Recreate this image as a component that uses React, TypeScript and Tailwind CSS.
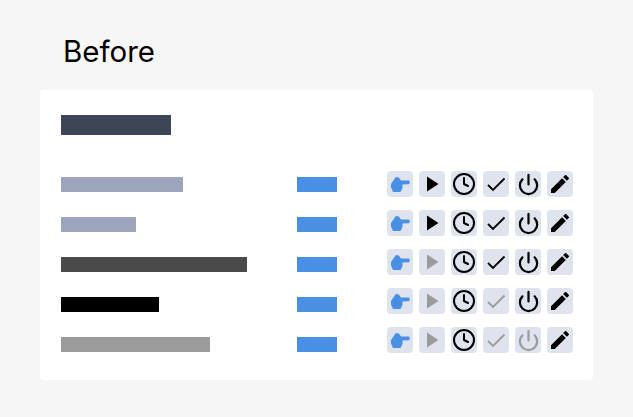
import React from 'react';
import { Clock, Power } from 'lucide-react';
import { MdEdit } from 'react-icons/md';

const bars = [
  { width: 'w-[122px]', color: 'bg-[#9ca5bb]' },
  { width: 'w-[75px]', color: 'bg-[#9ca5bb]' },
  { width: 'w-[186px]', color: 'bg-[#4a4a4a]' },
  { width: 'w-[98px]', color: 'bg-black' },
  { width: 'w-[149px]', color: 'bg-[#9b9b9b]' },
];

const rows = [
  { play: true, check: true, power: true },
  { play: true, check: true, power: true },
  { play: false, check: true, power: true },
  { play: false, check: false, power: true },
  { play: false, check: false, power: false },
];

const IconButton = ({ children }: { children: React.ReactNode }) => (
  <div className="w-[26px] h-[26px] rounded-[4px] bg-[#dfe3ee] flex items-center justify-center">
    {children}
  </div>
);

const HandIcon = () => (
  <svg width="26" height="26" viewBox="0 0 26 26">
    <path
      d="M4 13 L8.8 6 L11.8 6.5 L14 9.5 L21.8 9.5 C23 9.7 23 13.1 21.8 13.3 L15.5 13.5 L15.5 17 L13.5 21 L6 21 L4 16.5 Z"
      fill="#4a90e2"
    />
  </svg>
);

const ActionRow = ({ play, check, power }: { play: boolean; check: boolean; power: boolean }) => (
  <div className="flex gap-[6px]">
    <IconButton>
      <HandIcon />
    </IconButton>
    <IconButton>
      <svg width="26" height="26" viewBox="0 0 26 26">
        <path d="M8 5.5 L19.5 13 L8 20.5 Z" fill={play ? '#000' : '#9b9b9b'} />
      </svg>
    </IconButton>
    <IconButton>
      <Clock size={24} strokeWidth={2} className="text-black" />
    </IconButton>
    <IconButton>
      <svg width="26" height="26" viewBox="0 0 26 26" fill="none">
        <path
          d="M5 14 L10 19 L21.5 7.5"
          stroke={check ? '#000' : '#9b9b9b'}
          strokeWidth="1.8"
        />
      </svg>
    </IconButton>
    <IconButton>
      <Power size={23} strokeWidth={2.3} className={power ? 'text-black' : 'text-[#9b9b9b]'} />
    </IconButton>
    <IconButton>
      <MdEdit size={24} className="text-black" />
    </IconButton>
  </div>
);

export default function App() {
  return (
    <div className="w-[633px] h-[417px] bg-[#f6f6f6] pt-[31px] px-[40px] font-['Inter',sans-serif]">
      <h1 className="pl-[23px] text-[29.5px] leading-[40px] text-black">Before</h1>
      <div className="mt-[19px] h-[290px] bg-white rounded-[4px] pt-[25px] pl-[21px] pr-[20px]">
        <div className="w-[110px] h-[20px] bg-[#3d4556]" />
        <div className="mt-[36px] flex">
          <div className="w-[236px] pt-[6px] flex flex-col gap-[25px]">
            {bars.map((bar, i) => (
              <div key={i} className={`h-[15px] ${bar.width} ${bar.color}`} />
            ))}
          </div>
          <div className="w-[90px] pt-[6px] flex flex-col gap-[25px]">
            {bars.map((_, i) => (
              <div key={i} className="w-[40px] h-[15px] bg-[#4a90e2]" />
            ))}
          </div>
          <div className="flex flex-col gap-[13px]">
            {rows.map((row, i) => (
              <ActionRow key={i} {...row} />
            ))}
          </div>
        </div>
      </div>
    </div>
  );
}
